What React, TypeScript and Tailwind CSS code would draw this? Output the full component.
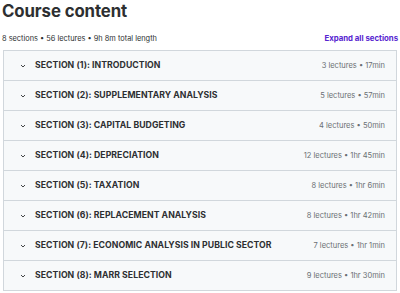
import React from "react";

const sections = [
  ["SECTION (1): INTRODUCTION", "3 lectures • 17min"],
  ["SECTION (2): SUPPLEMENTARY ANALYSIS", "5 lectures • 57min"],
  ["SECTION (3): CAPITAL BUDGETING", "4 lectures • 50min"],
  ["SECTION (4): DEPRECIATION", "12 lectures • 1hr 45min"],
  ["SECTION (5): TAXATION", "8 lectures • 1hr 6min"],
  ["SECTION (6): REPLACEMENT ANALYSIS", "8 lectures • 1hr 42min"],
  ["SECTION (7): ECONOMIC ANALYSIS IN PUBLIC SECTOR", "7 lectures • 1hr 1min"],
  ["SECTION (8): MARR SELECTION", "9 lectures • 1hr 30min"],
];

function Chevron() {
  return (
    <svg width="6" height="6" viewBox="0 0 6 6" className="shrink-0">
      <path d="M1 2 L3 4 L5 2" fill="none" stroke="#2d2f31" strokeWidth="0.9" />
    </svg>
  );
}

export default function App() {
  return (
    <div className="w-[400px] h-[293px] bg-white overflow-hidden" style={{ fontFamily: "Inter, 'Noto Sans', sans-serif" }}>
      <div className="pl-[2px] pt-[1px] text-[16.8px] font-bold text-[#2d2f31] leading-[20px] tracking-[-0.1px]">Course content</div>
      <div className="flex items-center justify-between pl-[2px] pr-[2px] mt-[12px] h-[12px]">
        <span className="text-[7.4px] text-[#2d2f31]">8 sections • 56 lectures • 9h 8m total length</span>
        <span className="text-[7.8px] font-bold text-[#5624d0]">Expand all sections</span>
      </div>
      <div className="mt-[5px] mx-[3px] border border-[#d1d7dc] flex flex-col">
        {sections.map(([title, meta], i) => (
          <div
            key={i}
            className={`bg-[#f7f9fa] flex items-center pl-[16px] pr-[11px] pt-[1px] ${i > 0 ? "border-t border-[#d1d7dc] h-[30px]" : "h-[29px]"}`}
          >
            <Chevron />
            <span className="ml-[9px] text-[8.7px] font-bold text-[#2d2f31] flex-1 tracking-[0.05px]">{title}</span>
            <span className="text-[7.5px] text-[#6a6f73]">{meta}</span>
          </div>
        ))}
      </div>
    </div>
  );
}
